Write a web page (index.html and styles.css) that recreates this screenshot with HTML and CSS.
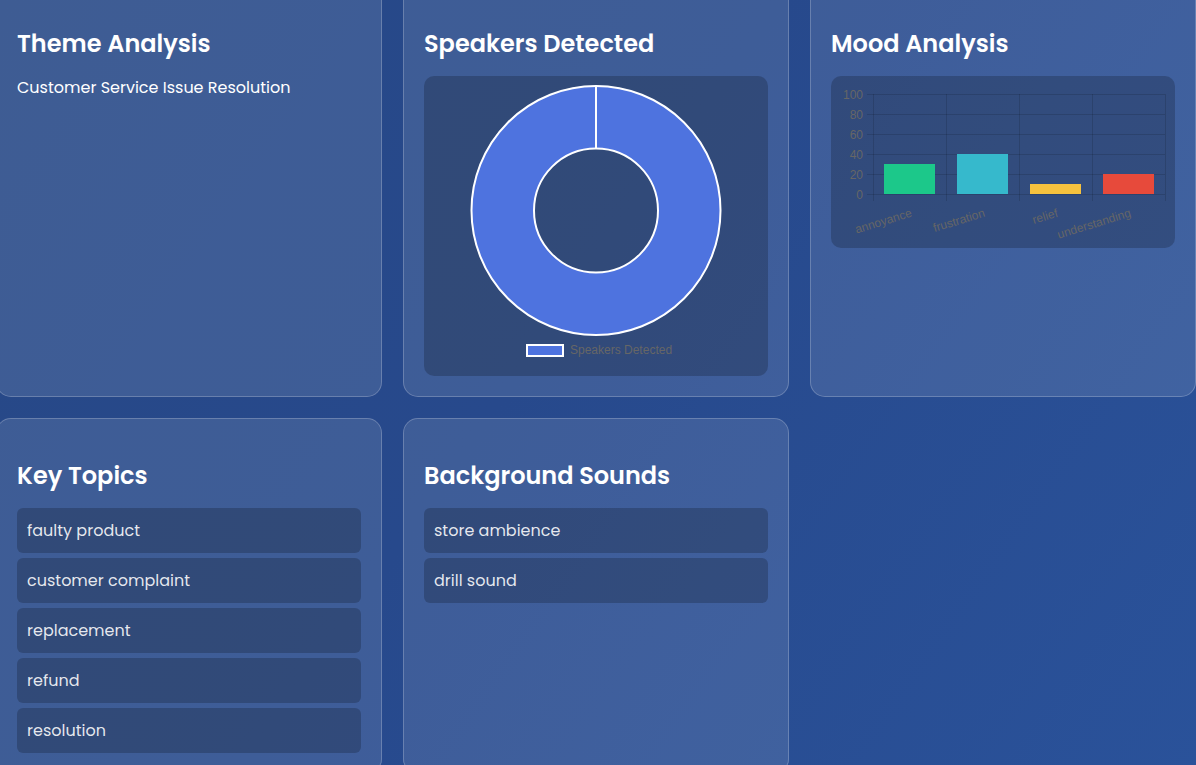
FILE: index.html
```html
<!DOCTYPE html>
<html lang="en">
<head>
<meta charset="utf-8">
<title>Call Analysis</title>
<link rel="stylesheet" href="styles.css">
</head>
<body>
<main class="grid">
  <section class="card">
    <h2 class="card-title">Theme Analysis</h2>
    <p class="theme-text">Customer Service Issue Resolution</p>
  </section>

  <section class="card">
    <h2 class="card-title">Speakers Detected</h2>
    <div class="chart-box chart-donut">
      <svg width="344" height="300" viewBox="0 0 344 300" xmlns="http://www.w3.org/2000/svg">
        <circle cx="172" cy="134.5" r="93.5" fill="none" stroke="#4e73df" stroke-width="63"/>
        <circle cx="172" cy="134.5" r="124.5" fill="none" stroke="#ffffff" stroke-width="2"/>
        <circle cx="172" cy="134.5" r="62" fill="none" stroke="#ffffff" stroke-width="2"/>
        <line x1="172" y1="10" x2="172" y2="72" stroke="#ffffff" stroke-width="2"/>
        <rect x="103" y="269" width="36" height="11" fill="#4e73df" stroke="#ffffff" stroke-width="2"/>
        <text x="146" y="278" class="chart-label">Speakers Detected</text>
      </svg>
    </div>
  </section>

  <section class="card">
    <h2 class="card-title">Mood Analysis</h2>
    <div class="chart-box chart-bar">
      <svg width="344" height="172" viewBox="0 0 344 172" xmlns="http://www.w3.org/2000/svg">
        <g class="grid-lines">
          <line x1="36" y1="18.5" x2="334" y2="18.5"/>
          <line x1="36" y1="38.5" x2="334" y2="38.5"/>
          <line x1="36" y1="58.5" x2="334" y2="58.5"/>
          <line x1="36" y1="78.5" x2="334" y2="78.5"/>
          <line x1="36" y1="98.5" x2="334" y2="98.5"/>
          <line x1="36" y1="118.5" x2="334" y2="118.5"/>
          <line x1="42.5" y1="18" x2="42.5" y2="125"/>
          <line x1="115.5" y1="18" x2="115.5" y2="125"/>
          <line x1="188.5" y1="18" x2="188.5" y2="125"/>
          <line x1="261.5" y1="18" x2="261.5" y2="125"/>
          <line x1="334.5" y1="18" x2="334.5" y2="125"/>
        </g>
        <g class="y-labels">
          <text x="32" y="23">100</text>
          <text x="32" y="43">80</text>
          <text x="32" y="63">60</text>
          <text x="32" y="83">40</text>
          <text x="32" y="103">20</text>
          <text x="32" y="123">0</text>
        </g>
        <rect x="53" y="88" width="51" height="30" fill="#1cc88a"/>
        <rect x="126" y="78" width="51" height="40" fill="#36b9cc"/>
        <rect x="199" y="108" width="51" height="10" fill="#f6c23e"/>
        <rect x="272" y="98" width="51" height="20" fill="#e74a3b"/>
        <g class="x-labels">
          <text transform="translate(79 132) rotate(-17)">annoyance</text>
          <text transform="translate(152 132) rotate(-17)">frustration</text>
          <text transform="translate(225 132) rotate(-17)">relief</text>
          <text transform="translate(298 132) rotate(-17)">understanding</text>
        </g>
      </svg>
    </div>
  </section>

  <section class="card">
    <h2 class="card-title">Key Topics</h2>
    <ul class="tag-list">
      <li class="tag-item">faulty product</li>
      <li class="tag-item">customer complaint</li>
      <li class="tag-item">replacement</li>
      <li class="tag-item">refund</li>
      <li class="tag-item">resolution</li>
    </ul>
  </section>

  <section class="card">
    <h2 class="card-title">Background Sounds</h2>
    <ul class="tag-list">
      <li class="tag-item">store ambience</li>
      <li class="tag-item">drill sound</li>
    </ul>
  </section>
</main>
</body>
</html>
```

FILE: styles.css
```css
html, body {
  margin: 0;
  padding: 0;
}

body {
  min-height: 100vh;
  overflow: hidden;
  background: linear-gradient(125deg, #274886 0%, #27498c 45%, #2a529a 100%);
  font-family: "Poppins", "Open Sans", "Noto Sans", sans-serif;
  color: #ffffff;
}

.grid {
  display: grid;
  grid-template-columns: repeat(3, 386px);
  column-gap: 21px;
  row-gap: 21px;
  margin: -14px 0 0 -4px;
}

.card {
  background: rgba(255, 255, 255, 0.11);
  border: 1px solid rgba(255, 255, 255, 0.22);
  border-radius: 15px;
  padding: 20px;
}

.card-title {
  margin: 21px 0 16px;
  font-size: 24px;
  line-height: 32px;
  font-weight: 600;
  color: #ffffff;
}

.theme-text {
  margin: 0;
  font-size: 16px;
  line-height: 24px;
  font-weight: 400;
  color: #ffffff;
}

.chart-box {
  background: rgba(0, 0, 0, 0.2);
  border-radius: 10px;
}

.chart-box svg {
  display: block;
}

.chart-donut {
  height: 300px;
}

.chart-bar {
  height: 172px;
}

.chart-label {
  font-family: "Liberation Sans", Arial, sans-serif;
  font-size: 12px;
  fill: #666666;
}

.grid-lines line {
  stroke: rgba(0, 0, 0, 0.13);
  stroke-width: 1;
}

.y-labels text {
  font-family: "Liberation Sans", Arial, sans-serif;
  font-size: 12px;
  fill: #666666;
  text-anchor: end;
}

.x-labels text {
  font-family: "Liberation Sans", Arial, sans-serif;
  font-size: 12px;
  fill: #666666;
  text-anchor: end;
  dominant-baseline: hanging;
}

.tag-list {
  list-style: none;
  margin: 0;
  padding: 0;
  display: flex;
  flex-direction: column;
  gap: 5px;
}

.tag-item {
  background: rgba(0, 0, 0, 0.2);
  border-radius: 6px;
  padding: 10px 10px;
  font-size: 16px;
  line-height: 25px;
  font-weight: 400;
  color: rgba(255, 255, 255, 0.88);
}
```
